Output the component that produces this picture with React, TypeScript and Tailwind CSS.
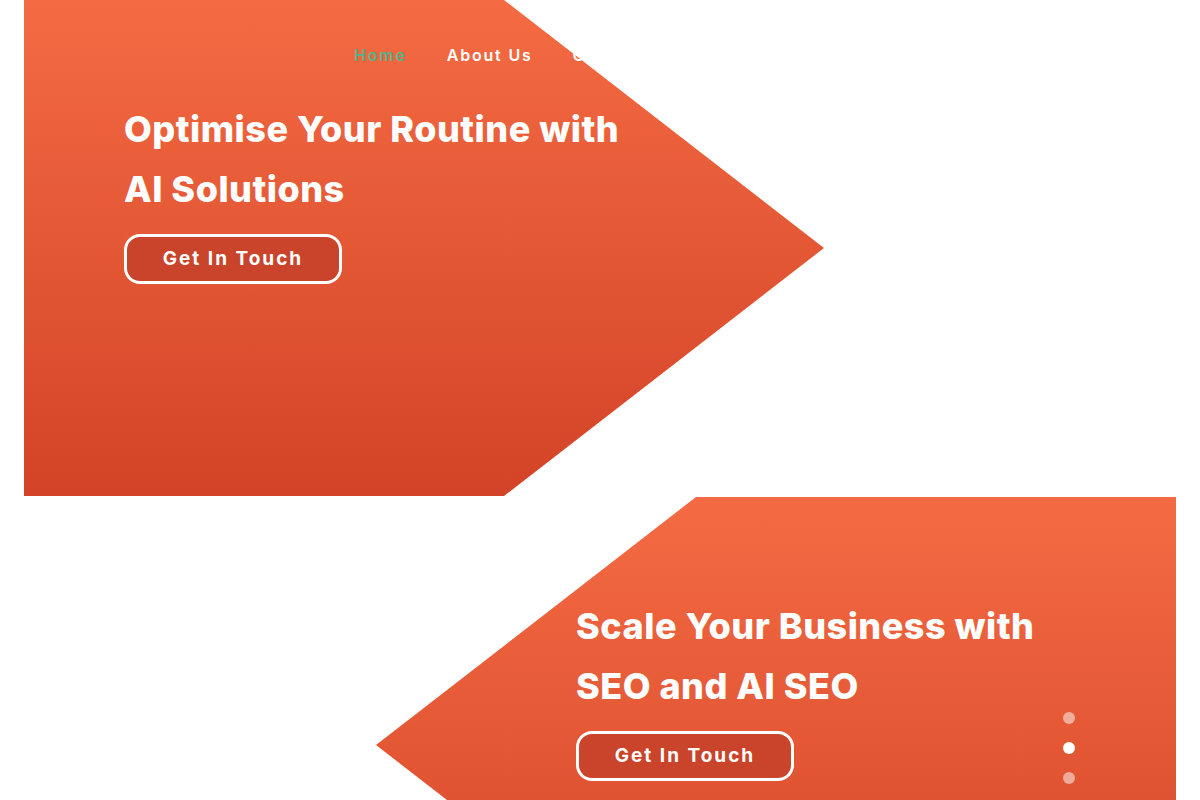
import React from "react";

const heading = "font-['Inter',sans-serif] font-extrabold text-[36px] leading-[60px] text-white tracking-[0.5px]";
const btn =
  "inline-flex items-center justify-center w-[218px] h-[50px] rounded-[16px] border-[3px] border-white bg-[#c9442b] text-white font-['Inter',sans-serif] font-bold text-[19px] tracking-[2px]";

export default function App() {
  return (
    <div className="relative w-[1200px] h-[800px] overflow-hidden bg-white">
      {/* Header */}
      <nav className="absolute top-[43px] left-[354px] z-10 flex gap-[40px] font-['Inter',sans-serif] font-semibold text-[16px] tracking-[1.8px]">
        <span className="text-[#52b488]">Home</span>
        <span className="text-white">About Us</span>
        <span className="text-white">Contact</span>
      </nav>

      {/* Slide 1 */}
      <section className="px-[24px] h-[497px]">
        <div className="w-[800px] h-[496px] bg-gradient-to-b from-[#f46b43] to-[#d34327] [clip-path:polygon(0_0,60%_0,100%_50%,60%_100%,0_100%)] pl-[100px] pt-[99px]">
          <h1 className={heading}>
            Optimise Your Routine with
            <br />
            AI Solutions
          </h1>
          <div className="mt-[15px]">
            <span className={btn}>Get In Touch</span>
          </div>
        </div>
      </section>

      {/* Slide 2 */}
      <section className="flex justify-end pr-[24px]">
        <div className="w-[800px] h-[496px] bg-gradient-to-b from-[#f46b43] to-[#d34327] [clip-path:polygon(40%_0,100%_0,100%_100%,40%_100%,0_50%)] pl-[200px] pt-[99px]">
          <h2 className={heading}>
            Scale Your Business with
            <br />
            SEO and AI SEO
          </h2>
          <div className="mt-[15px]">
            <span className={btn}>Get In Touch</span>
          </div>
        </div>
      </section>

      {/* Pager */}
      <div className="absolute left-[1063px] top-[712px] flex flex-col gap-[18px]">
        <span className="block w-[12px] h-[12px] rounded-full bg-white/50" />
        <span className="block w-[12px] h-[12px] rounded-full bg-white" />
        <span className="block w-[12px] h-[12px] rounded-full bg-white/50" />
      </div>
    </div>
  );
}
